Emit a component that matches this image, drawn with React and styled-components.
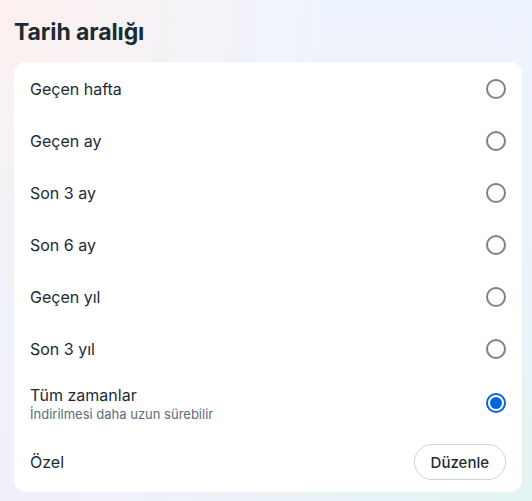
import React, { useState } from "react"
import styled, { createGlobalStyle } from "styled-components"

const GlobalStyle = createGlobalStyle`
    html, body {
        margin:0;
        padding:0;
    }
    body {
        font-family:Inter, "Noto Sans", "Liberation Sans", sans-serif;
        color:#1c2b33;
        background:#eef3fb;
    }
`;

const options = [
    { id: "week", label: "Geçen hafta" },
    { id: "month", label: "Geçen ay" },
    { id: "3m", label: "Son 3 ay" },
    { id: "6m", label: "Son 6 ay" },
    { id: "year", label: "Geçen yıl" },
    { id: "3y", label: "Son 3 yıl" },
    { id: "all", label: "Tüm zamanlar", hint: "İndirilmesi daha uzun sürebilir" },
]

export default function App(){
    const [selected, setSelected] = useState("all")
    return(
        <Page>
            <GlobalStyle />
            <Title>Tarih aralığı</Title>
            <Card>
                {options.map(o => (
                    <Row key={o.id} $tall={!!o.hint} onClick={() => setSelected(o.id)}>
                        <Labels>
                            <Label>{o.label}</Label>
                            {o.hint && <Hint>{o.hint}</Hint>}
                        </Labels>
                        <Radio $checked={selected === o.id} />
                    </Row>
                ))}
                <Row $last>
                    <Label>Özel</Label>
                    <EditButton>Düzenle</EditButton>
                </Row>
            </Card>
        </Page>
    )
}

const Page = styled.div`
    width:532px;
    height:501px;
    box-sizing:border-box;
    padding:0 10px 0 14px;
    background:
        radial-gradient(circle at 0% 0%, #fcf0ee 0%, rgba(252,240,238,0) 45%),
        radial-gradient(circle at 100% 100%, #e4f3f3 0%, rgba(228,243,243,0) 55%),
        radial-gradient(circle at 0% 100%, #f1f0fa 0%, rgba(241,240,250,0) 50%),
        linear-gradient(180deg, #eef4fd 0%, #eef3fb 100%);
    overflow:hidden;
`;

const Title = styled.h1`
    margin:0;
    padding:18px 0 0;
    height:62px;
    box-sizing:border-box;
    font-size:23px;
    font-weight:700;
    letter-spacing:-0.1px;
    color:#1c2b33;
`;

const Card = styled.div`
    background:#fff;
    border-radius:12px;
    width:508px;
    height:430px;
    display:flex;
    flex-direction:column;
    padding:1px 0 0;
    box-sizing:border-box;
`;

const Row = styled.div`
    display:flex;
    align-items:center;
    justify-content:space-between;
    height:${p => p.$tall ? "56px" : p.$last ? "62px" : "52px"};
    padding:0 16px 0 16px;
    cursor:pointer;
    flex-shrink:0;
`;

const Labels = styled.div`
    display:flex;
    flex-direction:column;
    gap:1px;
`;

const Label = styled.div`
    font-size:16px;
    font-weight:400;
    color:#1c2b33;
`;

const Hint = styled.div`
    font-size:13px;
    color:#5d6c7b;
`;

const Radio = styled.span`
    width:20px;
    height:20px;
    box-sizing:border-box;
    border-radius:50%;
    border:2px solid ${p => p.$checked ? "#0064e0" : "#7c8288"};
    display:flex;
    align-items:center;
    justify-content:center;
    &::after{
        content:"";
        width:12px;
        height:12px;
        border-radius:50%;
        background:${p => p.$checked ? "#0064e0" : "transparent"};
    }
`;

const EditButton = styled.button`
    font-family:inherit;
    font-size:15px;
    font-weight:500;
    color:#1c2b33;
    background:#fff;
    border:1px solid #ccd3d9;
    border-radius:18px;
    height:36px;
    padding:0 16px;
    cursor:pointer;
`;
